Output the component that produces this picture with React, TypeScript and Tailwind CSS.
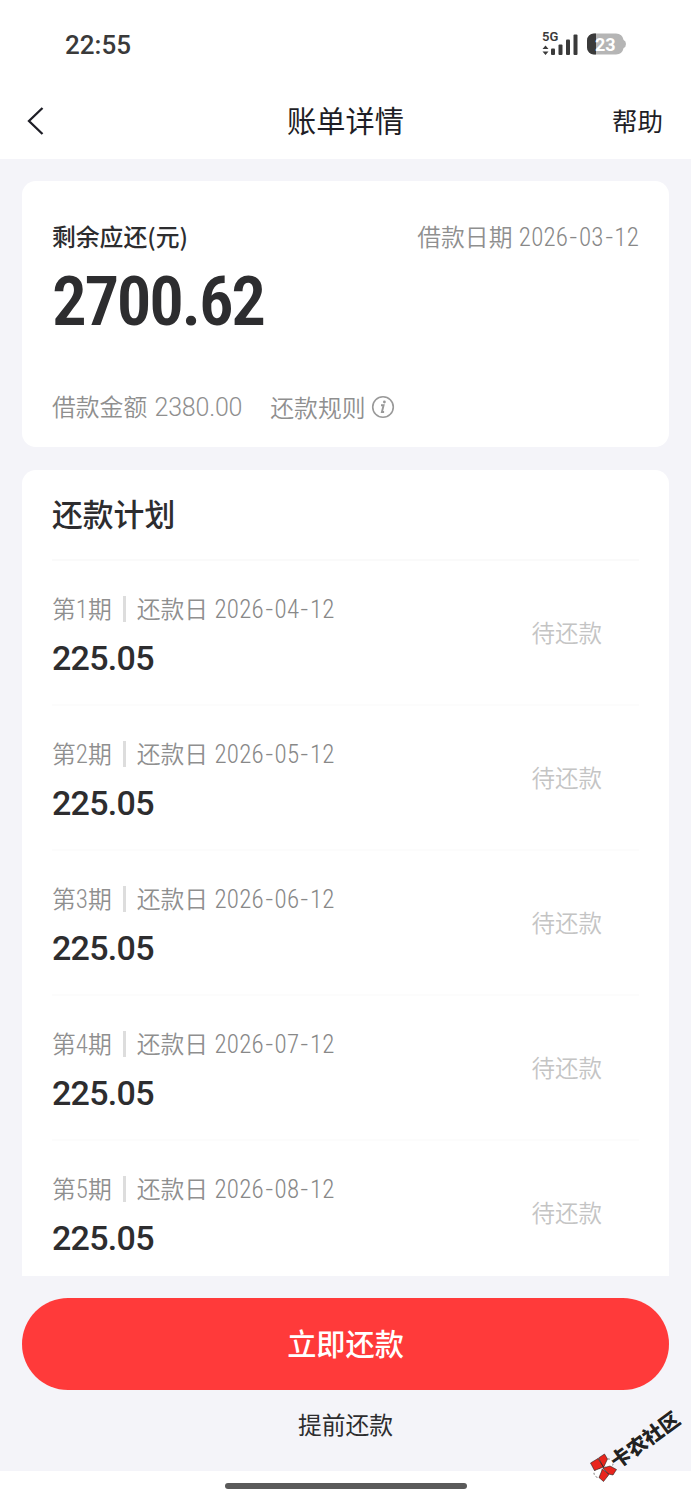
import { Fragment } from 'react'

interface Installment {
  period: number
  dueDate: string
  amount: string
}

const INSTALLMENTS: Installment[] = [
  { period: 1, dueDate: '2026-04-12', amount: '225.05' },
  { period: 2, dueDate: '2026-05-12', amount: '225.05' },
  { period: 3, dueDate: '2026-06-12', amount: '225.05' },
  { period: 4, dueDate: '2026-07-12', amount: '225.05' },
  { period: 5, dueDate: '2026-08-12', amount: '225.05' },
]

export default function App() {
  return (
    <div className="flex h-[1500px] w-[691px] flex-col overflow-hidden bg-[#f4f4f9] font-['Noto_Sans_CJK_SC',sans-serif] text-[#2d2d2f]">
      <StatusBar />
      <NavBar />
      <main className="flex min-h-0 flex-1 flex-col gap-[23px] px-[22px] pt-[22px]">
        <SummaryCard />
        <PlanCard />
      </main>
      <Footer />
    </div>
  )
}

function StatusBar() {
  return (
    <div className="flex h-[82px] shrink-0 items-center justify-between bg-white pt-[7px] pr-[64px] pl-[65px]">
      <span className="font-[Roboto,sans-serif] text-[26px] leading-none font-medium text-[#3a3a3a]">
        22:55
      </span>
      <div className="flex items-center gap-[8px]">
        <svg width="37" height="36" viewBox="0 -5 37 36" fill="#3a3a3a">
          <text x="1" y="9" fontFamily="Roboto, sans-serif" fontSize="13" fontWeight="600">
            5G
          </text>
          <path d="M4.500 13.500l3 3.500h-6zM4.500 23l3-3.500h-6z" />
          <rect x="10" y="16.500" width="4" height="6.500" rx="1" />
          <rect x="17.500" y="12.500" width="4" height="10.500" rx="1" />
          <rect x="25" y="7.500" width="4" height="15.500" rx="1" />
          <rect x="32.500" y="2.500" width="4" height="20.500" rx="1" />
        </svg>
        <svg className="-mt-px" width="41" height="22" viewBox="0 0 41 22">
          <path d="M8 0.500h22a8 8 0 0 1 7.600 6.500q2.400 1 2.400 4t-2.400 4a8 8 0 0 1-7.600 6.500H8a7 7 0 0 1-7-7v-7a7 7 0 0 1 7-7z" fill="#b5b5b5" />
          <path d="M10 0.500v21H8a7 7 0 0 1-7-7v-7a7 7 0 0 1 7-7z" fill="#3a3a3a" />
          <text x="9" y="17.500" fontFamily="Roboto, sans-serif" fontSize="18" fontWeight="700" fill="#fff">
            23
          </text>
        </svg>
      </div>
    </div>
  )
}

function NavBar() {
  return (
    <header className="grid h-[77px] shrink-0 grid-cols-3 items-center bg-white px-[27px] text-[#1e1e26]">
      <button aria-label="返回" className="justify-self-start">
        <svg width="18" height="30" viewBox="0 0 18 30" fill="none" stroke="#1e1e26" strokeWidth="2.300">
          <path d="M15.500 2L2 15l13.500 13" />
        </svg>
      </button>
      <h1 className="justify-self-center pb-[2px] text-[29.200px] leading-none">账单详情</h1>
      <button className="justify-self-end pr-px pb-[2px] text-[25.500px] leading-none">帮助</button>
    </header>
  )
}

function SummaryCard() {
  return (
    <section className="flex h-[266px] shrink-0 flex-col rounded-[14px] bg-white px-[30px] pt-[41px]">
      <div className="flex items-center justify-between text-[23.800px] leading-[26px]">
        <span className="pb-px font-medium">剩余应还(元)</span>
        <span className="pt-px font-[350] text-[#8f8f8f]">
          借款日期 <DateText value="2026-03-12" />
        </span>
      </div>
      <div className="mt-[16px] font-[Roboto,sans-serif] text-[69px] leading-[70px] font-semibold tracking-[-2.300px] [font-stretch:75%]">
        2700.62
      </div>
      <div className="mt-[56px] flex items-center text-[23.800px] leading-[26px] font-[350] text-[#8f8f8f]">
        <span>
          借款金额{' '}
          <span className="ml-[2px] font-[Roboto,sans-serif] text-[25px] font-light tracking-[-0.200px]">
            2380.00
          </span>
        </span>
        <span className="ml-[28px]">还款规则</span>
        <InfoIcon />
      </div>
    </section>
  )
}

function InfoIcon() {
  return (
    <svg className="ml-[6px]" width="24" height="24" viewBox="0 0 24 24" fill="none" stroke="#999">
      <circle cx="12" cy="12" r="10.300" strokeWidth="1.600" />
      <path d="M10 10.300h2.600l-1.700 6.700h2.200" strokeWidth="1.900" />
      <circle cx="13.400" cy="7" r="1.400" fill="#999" stroke="none" />
    </svg>
  )
}

function PlanCard() {
  return (
    <section className="min-h-0 flex-1 overflow-hidden rounded-t-[14px] bg-white px-[30px]">
      <h2 className="h-[91px] border-b-2 border-[#fafafa] pt-[28px] text-[30.800px] leading-[30px] font-medium">
        还款计划
      </h2>
      {INSTALLMENTS.map(item => (
        <InstallmentRow key={item.period} item={item} />
      ))}
    </section>
  )
}

function InstallmentRow({ item }: { item: Installment }) {
  return (
    <div className="flex h-[145px] items-center justify-between border-b-2 border-[#fcfcfc] pr-[37px]">
      <div className="pt-[4px]">
        <div className="flex items-center text-[23.800px] leading-[26px] font-[350] text-[#8f8f8f]">
          <span>
            第<span className="font-[Roboto,sans-serif] text-[25px] font-light [font-stretch:75%]">{item.period}</span>期
          </span>
          <span className="mr-[11px] ml-[11px] h-[26px] w-[3px] bg-[#ddd]" />
          <span>
            还款日 <DateText value={item.dueDate} />
          </span>
        </div>
        <div className="mt-[18px] font-[Roboto,sans-serif] text-[34px] leading-[34px] font-medium tracking-[-0.700px]">
          {item.amount}
        </div>
      </div>
      <span className="pb-[2px] text-[23.500px] leading-[26px] font-[350] text-[#c4c4c4]">待还款</span>
    </div>
  )
}

// Roboto's hyphen is narrow next to its digits, so it is widened here.
function DateText({ value }: { value: string }) {
  return (
    <span className="ml-px font-[Roboto,sans-serif] text-[25px] font-light tracking-[0.200px] text-[#888] [font-stretch:75%]">
      {value.split('-').map((part, i) => (
        <Fragment key={i}>
          {i > 0 && <span className="inline-block scale-x-125 px-[2px]">-</span>}
          {part}
        </Fragment>
      ))}
    </span>
  )
}

function Footer() {
  return (
    <footer className="relative shrink-0 px-[22px] pt-[22px]">
      <button className="flex h-[92px] w-full items-center justify-center rounded-full bg-[#ff3a3a] pb-[3px] text-[29.200px] leading-none font-medium text-white">
        立即还款
      </button>
      <button className="mt-[20px] block w-full text-center text-[23.800px] leading-[28px]">提前还款</button>
      <div className="-mx-[22px] mt-[33px] flex h-[29px] items-start justify-center bg-white pt-[12px]">
        <div className="h-[6px] w-[242px] rounded-full bg-[#5a5a5a]" />
      </div>
      <Watermark />
    </footer>
  )
}

function Watermark() {
  return (
    <svg className="absolute right-0 bottom-0" width="111" height="100" viewBox="0 0 111 100">
      <g stroke="#222" strokeWidth="0.600">
        <circle cx="28.500" cy="63.500" r="4.500" fill="#fff" strokeDasharray="2 2" />
        <circle cx="18.500" cy="73" r="4.500" fill="#fff" strokeDasharray="2 2" />
        <path
          d="M10.500 63l7.500-4.500 5.500 8.500-9 3.500zM18.500 58l6-4 3 5-4 8.500zM23 68l7-2 6.500 3.500-3.500 5.500-4.500-1zM22.500 69l6.500 5.500-5.500 7-4.500-4z"
          fill="#e8251d"
        />
      </g>
      <text
        transform="translate(37 69.500) rotate(-36)"
        fontFamily="Noto Sans CJK SC, sans-serif"
        fontSize="20"
        fontWeight="900"
        fill="#222"
        stroke="#fff"
        strokeWidth="0.800"
        paintOrder="stroke"
      >
        卡农社区
      </text>
    </svg>
  )
}
